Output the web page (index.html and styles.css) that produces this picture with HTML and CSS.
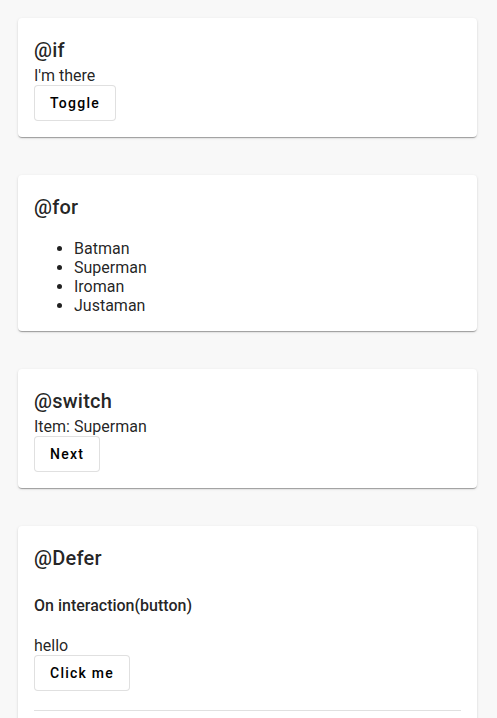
FILE: index.html
```html
<!DOCTYPE html>
<html lang="en">
<head>
  <meta charset="UTF-8">
  <title>Control flow</title>
  <meta name="viewport" content="width=device-width, initial-scale=1.0" />
  <link rel="stylesheet" href="styles.css">
</head>
<body>
  <div class="page">
    <div class="card">
      <div class="card-title">@if</div>
      <div class="card-content">
        <div>I'm there</div>
        <button class="btn">Toggle</button>
      </div>
    </div>

    <div class="card">
      <div class="card-title">@for</div>
      <div class="card-content">
        <ul class="heroes">
          <li>Batman</li>
          <li>Superman</li>
          <li>Iroman</li>
          <li>Justaman</li>
        </ul>
      </div>
    </div>

    <div class="card">
      <div class="card-title">@switch</div>
      <div class="card-content">
        <div>Item: Superman</div>
        <button class="btn">Next</button>
      </div>
    </div>

    <div class="card">
      <div class="card-title">@Defer</div>
      <div class="card-content">
        <h4 class="defer-label">On interaction(button)</h4>
        <div>hello</div>
        <button class="btn">Click me</button>
        <hr class="divider">
      </div>
    </div>
  </div>
</body>
</html>
```

FILE: styles.css
```css
body { margin: 0; background: #f8f8f8; font-family: Roboto, "Noto Sans", Arial, sans-serif; font-size: 16px; color: rgba(0,0,0,0.87); }
.page { padding: 18px 20px 18px 18px; display: flex; flex-direction: column; gap: 38px; }
.card { background: #fff; border-radius: 4px; padding: 16px; box-shadow: 0 2px 1px -1px rgba(0,0,0,.2), 0 1px 1px 0 rgba(0,0,0,.14), 0 1px 3px 0 rgba(0,0,0,.12); }
.card-title { font-size: 20px; line-height: 32px; font-weight: 500; letter-spacing: 0.0125em; }
.card-content { line-height: normal; }
.heroes { margin: 16px 0 0; padding-left: 40px; }
.defer-label { font-size: 16px; font-weight: 500; margin: 21.5px 0; }
.btn { display: block; height: 36px; min-width: 64px; padding: 0 15px; background: #fff; border: 1px solid rgba(0,0,0,0.12); border-radius: 4px; font-family: inherit; font-size: 14px; font-weight: 500; letter-spacing: 1.25px; color: #000; cursor: pointer; }
.divider { border: none; border-top: 1px solid rgba(0,0,0,0.12); margin: 18.5px 0 0; }
```
